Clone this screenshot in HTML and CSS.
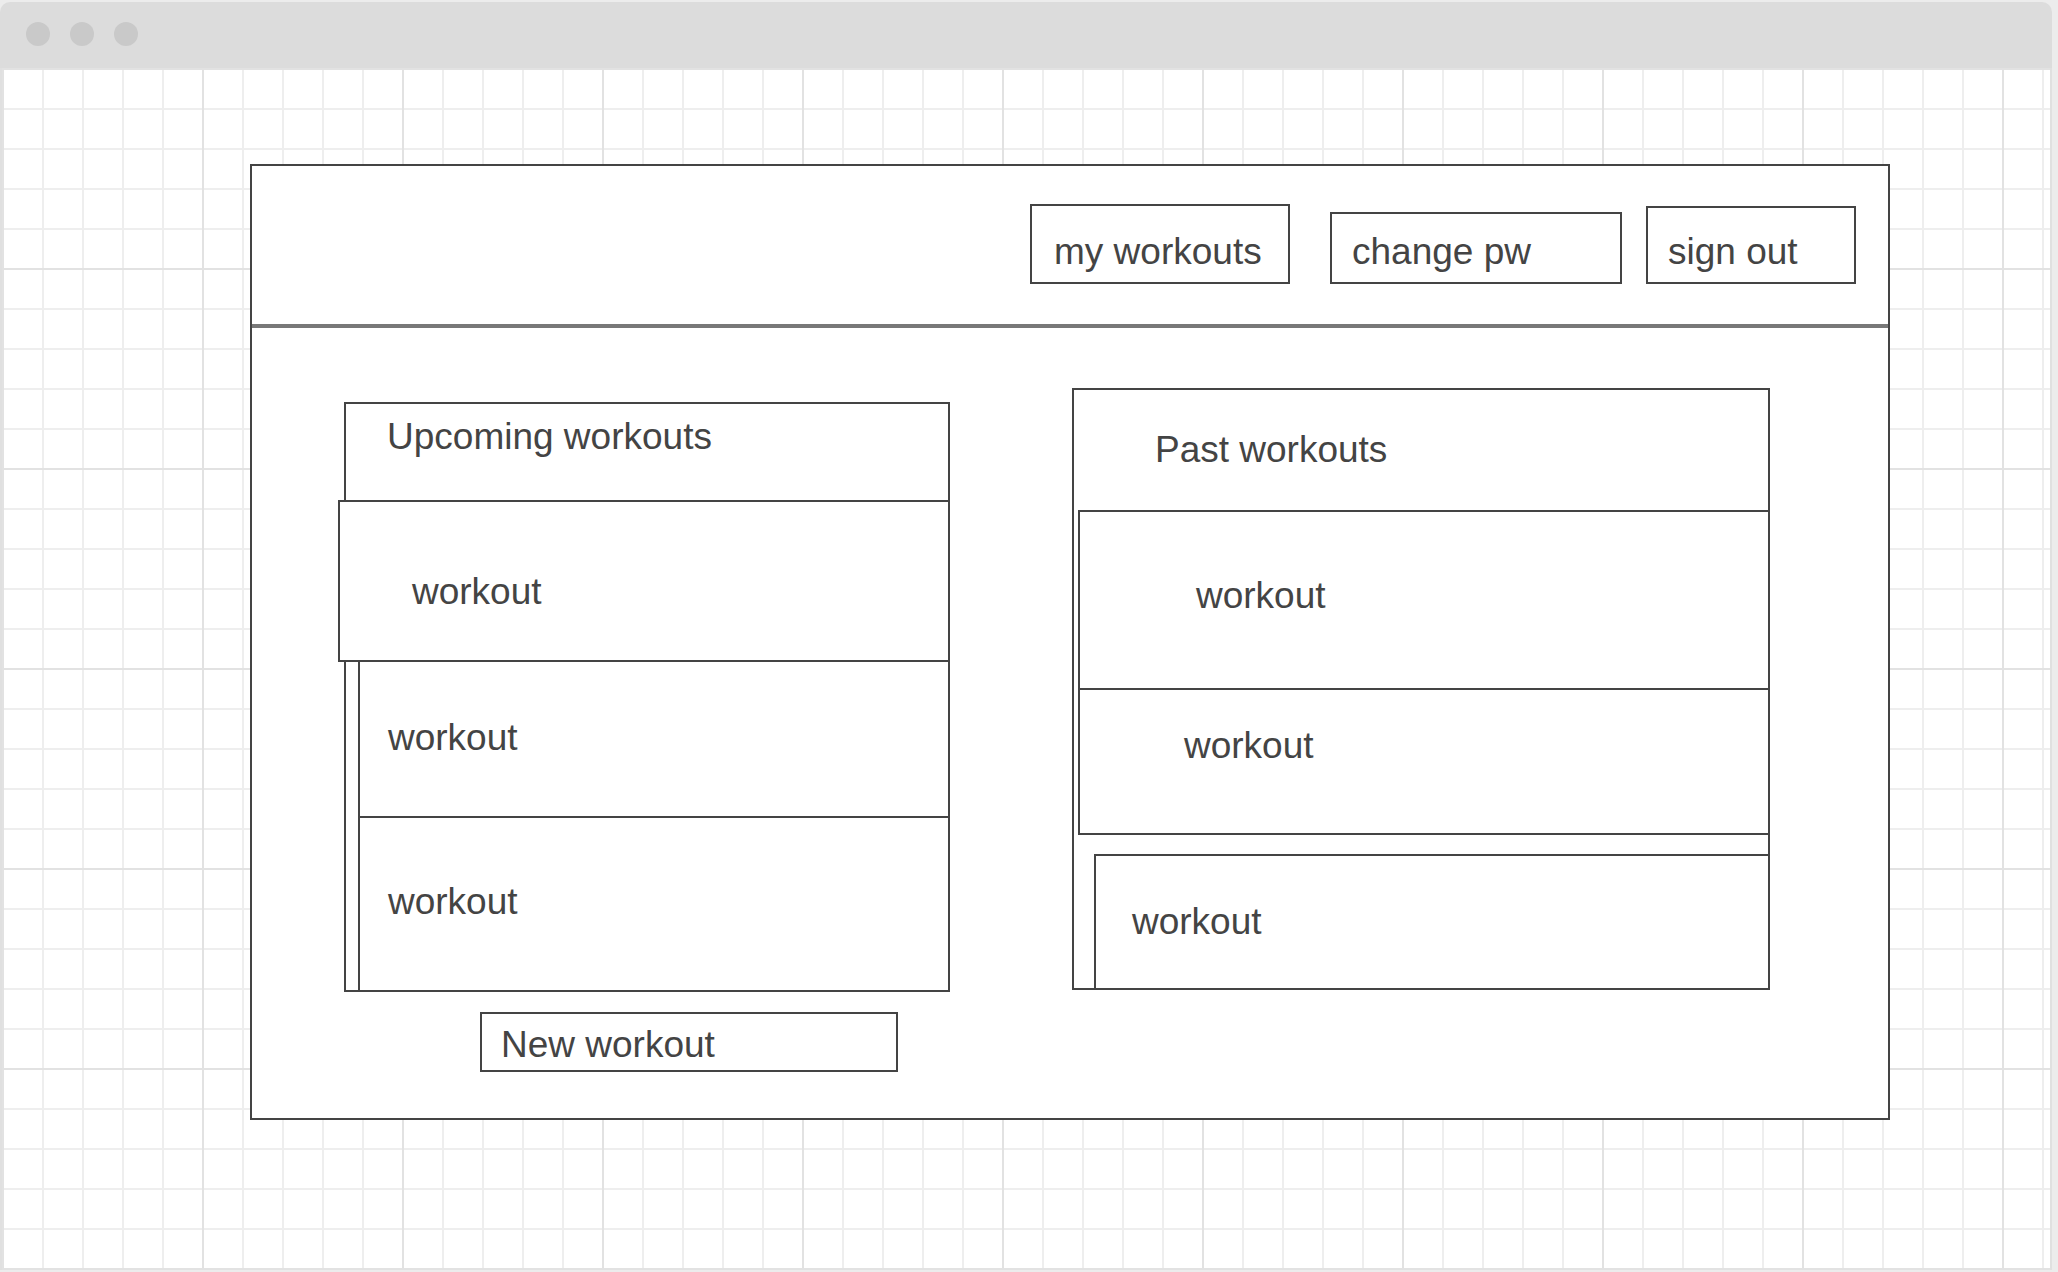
FILE: index.html
```html
<!DOCTYPE html>
<html>
<head>
<meta charset="utf-8">
<title>Workouts wireframe</title>
<link rel="stylesheet" href="styles.css">
</head>
<body>
<div class="window">
  <div class="titlebar"><span class="dot"></span><span class="dot"></span><span class="dot"></span></div>
  <div class="canvas">
    <div class="app">
      <header class="app-header">
        <div class="nav-btn btn-workouts"><span>my workouts</span></div>
        <div class="nav-btn btn-pw"><span>change pw</span></div>
        <div class="nav-btn btn-signout"><span>sign out</span></div>
      </header>
      <main class="app-body">
        <section class="col-upcoming">
          <div class="panel upcoming">
            <div class="panel-title">Upcoming workouts</div>
            <div class="row up-1">workout</div>
            <div class="row up-2">workout</div>
            <div class="row up-3">workout</div>
          </div>
          <div class="new-btn">New workout</div>
        </section>
        <section class="panel past">
          <div class="panel-title">Past workouts</div>
          <div class="row past-1">workout</div>
          <div class="row past-2">workout</div>
          <div class="row past-3">workout</div>
        </section>
      </main>
    </div>
  </div>
</div>
</body>
</html>
```

FILE: styles.css
```css
* { box-sizing: border-box; }
html, body { margin: 0; padding: 0; }
body {
  background: #ececec;
  font-family: "Liberation Sans", Arial, sans-serif;
  color: #444;
  width: 2058px;
  height: 1272px;
  overflow: hidden;
}
.window {
  margin-top: 2px;
  width: 2052px;
  height: 1268px;
  display: flex;
  flex-direction: column;
}
.titlebar {
  flex: 0 0 66px;
  background: #dcdcdc;
  border-radius: 10px 10px 0 0;
  display: flex;
  align-items: center;
  gap: 20px;
  padding: 0 0 2px 26px;
}
.dot {
  width: 24px;
  height: 24px;
  border-radius: 50%;
  background: #c9c9c9;
}
.canvas {
  flex: 1;
  border-left: 2px solid #e0e0e0;
  border-right: 2px solid #e0e0e0;
  background-color: #fff;
  background-image:
    linear-gradient(to right, #e2e2e2 0, #e2e2e2 2px, transparent 2px),
    linear-gradient(to bottom, #e2e2e2 0, #e2e2e2 2px, transparent 2px),
    linear-gradient(to right, #eeeeee 0, #eeeeee 2px, transparent 2px),
    linear-gradient(to bottom, #eeeeee 0, #eeeeee 2px, transparent 2px);
  background-size: 200px 200px, 200px 200px, 40px 40px, 40px 40px;
  padding: 96px 0 0 248px;
}
.app {
  width: 1640px;
  height: 956px;
  border: 2px solid #444;
  background: #fff;
  display: flex;
  flex-direction: column;
}
.app-header {
  flex: 0 0 162px;
  border-bottom: 4px solid #787878;
  display: flex;
  align-items: flex-end;
  padding: 0 32px 40px 778px;
}
.nav-btn {
  border: 2px solid #444;
  display: flex;
  align-items: flex-end;
  padding: 0 0 12px 20px;
  font-size: 37px;
  line-height: 36px;
  white-space: nowrap;
}
.btn-workouts { width: 260px; height: 80px; padding-left: 22px; }
.btn-pw { width: 292px; height: 72px; margin-left: 40px; }
.btn-signout { width: 210px; height: 78px; margin-left: 24px; }

.app-body {
  flex: 1;
  display: flex;
  align-items: flex-start;
  padding-left: 92px;
}
.col-upcoming {
  margin-top: 74px;
  width: 606px;
  display: flex;
  flex-direction: column;
}
.panel {
  border: 2px solid #444;
  display: flex;
  flex-direction: column;
  background: #fff;
}
.panel-title, .row, .new-btn {
  font-size: 37px;
  line-height: 36px;
  white-space: nowrap;
  flex-shrink: 0;
}
.row {
  border: 2px solid #444;
  background: #fff;
  margin-right: -2px;
}
.upcoming { width: 606px; height: 590px; }
.upcoming .panel-title { height: 96px; padding: 15px 0 0 41px; }
.up-1 { height: 162px; margin-left: -8px; padding: 72px 0 0 72px; }
.up-2 { height: 158px; margin-top: -2px; margin-left: 12px; padding: 58px 0 0 28px; }
.up-3 { height: 176px; margin-top: -2px; margin-left: 12px; margin-bottom: -2px; padding: 66px 0 0 28px; }

.new-btn {
  width: 418px;
  height: 60px;
  margin: 20px 0 0 136px;
  border: 2px solid #444;
  padding: 13px 0 0 19px;
}

.past { width: 698px; height: 602px; margin: 60px 0 0 122px; }
.past .panel-title { height: 120px; padding: 42px 0 0 81px; }
.past-1 { height: 180px; margin-left: 4px; padding: 66px 0 0 116px; }
.past-2 { height: 147px; margin-top: -2px; margin-left: 4px; padding: 38px 0 0 104px; }
.past-3 { height: 136px; margin-top: 19px; margin-left: 20px; margin-bottom: -2px; padding: 48px 0 0 36px; }
```
